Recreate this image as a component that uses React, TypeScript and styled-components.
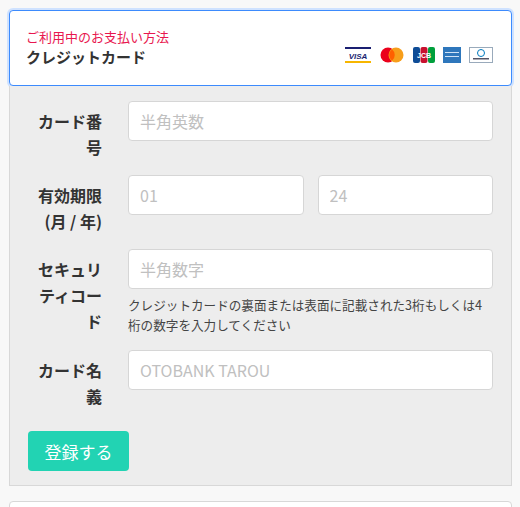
import React from "react";
import styled, { createGlobalStyle } from "styled-components";

const Global = createGlobalStyle`
  body { margin: 0; background: #f8f8f8; font-family: "Noto Sans CJK JP", "Noto Sans", sans-serif; color: #333; }
`;

const Wrap = styled.div`
  padding: 10px 8px 0 9px;
`;

const Head = styled.div`
  background: #fff;
  border: 1px solid #3d8bfd;
  box-shadow: 0 0 0 2px #cfe2ff;
  border-radius: 4px;
  height: 74px;
  padding: 0 16px;
  display: flex;
  align-items: center;
  justify-content: space-between;
`;

const Sub = styled.div`
  color: #e8174f;
  font-size: 13px;
  line-height: 18px;
`;

const Title = styled.div`
  font-size: 15px;
  font-weight: bold;
  line-height: 22px;
`;

const Brands = styled.div`
  display: flex;
  gap: 8px;
  align-items: center;
  margin-top: 14px;
  margin-right: 2px;
`;

const Panel = styled.div`
  background: #ededed;
  border: 1px solid #d8d8d8;
  border-top: none;
  padding: 15px 18px 14px 18px;
`;

const Row = styled.div`
  display: grid;
  grid-template-columns: 74px minmax(0, 1fr);
  column-gap: 26px;
  margin-bottom: 15px;
`;

const Label = styled.div`
  text-align: right;
  font-weight: bold;
  font-size: 16px;
  line-height: 26px;
  padding-top: 7px;
`;

const Inputs = styled.div`
  display: flex;
  gap: 14px;
`;

const Input = styled.input`
  flex: 1;
  width: 100%;
  min-width: 0;
  height: 40px;
  box-sizing: border-box;
  border: 1px solid #d6d6d6;
  border-radius: 4px;
  background: #fff;
  padding: 0 11px;
  font-size: 16px;
  font-family: inherit;
  &::placeholder { color: #c0c0c0; }
`;

const Help = styled.div`
  font-size: 12.6px;
  line-height: 20px;
  margin-top: 6px;
  color: #444;
`;

const Button = styled.button`
  margin-top: 7px;
  width: 101px;
  height: 40px;
  border: none;
  border-radius: 4px;
  background: #22d3b3;
  color: #fff;
  font-size: 17px;
  font-family: inherit;
`;

const Next = styled.div`
  margin-top: 15px;
  height: 20px;
  background: #fff;
  border: 1px solid #d8d8d8;
  border-radius: 4px;
`;

export default function App() {
  return (
    <>
      <Global />
      <Wrap>
        <Head>
          <div>
            <Sub>ご利用中のお支払い方法</Sub>
            <Title>クレジットカード</Title>
          </div>
          <Brands>
            <svg width="26" height="16" viewBox="0 0 26 16">
              <rect width="26" height="2" fill="#1a1f71" />
              <rect y="14" width="26" height="2" fill="#f7b600" />
              <text x="13" y="11.5" textAnchor="middle" fontSize="8" fontWeight="bold" fontStyle="italic" fill="#1a1f71" fontFamily="Liberation Sans">VISA</text>
            </svg>
            <svg width="26" height="16" viewBox="0 0 26 16">
              <circle cx="9" cy="8" r="7.5" fill="#eb001b" />
              <circle cx="17" cy="8" r="7.5" fill="#f79e1b" />
              <path d="M13 2.2a7.5 7.5 0 0 1 0 11.6a7.5 7.5 0 0 1 0-11.6z" fill="#ff5f00" />
            </svg>
            <svg width="22" height="16" viewBox="0 0 22 16">
              <rect x="0" width="7" height="16" rx="2" fill="#0e4c96" />
              <rect x="7.5" width="7" height="16" rx="2" fill="#c8102e" />
              <rect x="15" width="7" height="16" rx="2" fill="#009f3c" />
              <text x="11" y="11" textAnchor="middle" fontSize="7" fontWeight="bold" fill="#fff" fontFamily="Liberation Sans">JCB</text>
            </svg>
            <svg width="18" height="16" viewBox="0 0 18 16">
              <rect width="18" height="16" fill="#2e77bc" />
              <rect x="2" y="5" width="14" height="1" fill="#cfe3f7" />
              <rect x="2" y="9" width="14" height="1" fill="#cfe3f7" />
            </svg>
            <svg width="24" height="16" viewBox="0 0 24 16">
              <rect x="0.5" y="0.5" width="23" height="15" fill="#fff" stroke="#9ab" />
              <circle cx="12" cy="6" r="3.5" fill="none" stroke="#0079be" />
              <rect x="4" y="11" width="16" height="1.5" fill="#556" />
            </svg>
          </Brands>
        </Head>
        <Panel>
          <Row>
            <Label>カード番号</Label>
            <Inputs><Input placeholder="半角英数" /></Inputs>
          </Row>
          <Row>
            <Label>有効期限 (月 / 年)</Label>
            <Inputs><Input placeholder="01" /><Input placeholder="24" /></Inputs>
          </Row>
          <Row>
            <Label>セキュリティコード</Label>
            <div>
              <Inputs><Input placeholder="半角数字" /></Inputs>
              <Help>クレジットカードの裏面または表面に記載された3桁もしくは4桁の数字を入力してください</Help>
            </div>
          </Row>
          <Row>
            <Label>カード名義</Label>
            <Inputs><Input placeholder="OTOBANK TAROU" /></Inputs>
          </Row>
          <Button>登録する</Button>
        </Panel>
        <Next />
      </Wrap>
    </>
  );
}
